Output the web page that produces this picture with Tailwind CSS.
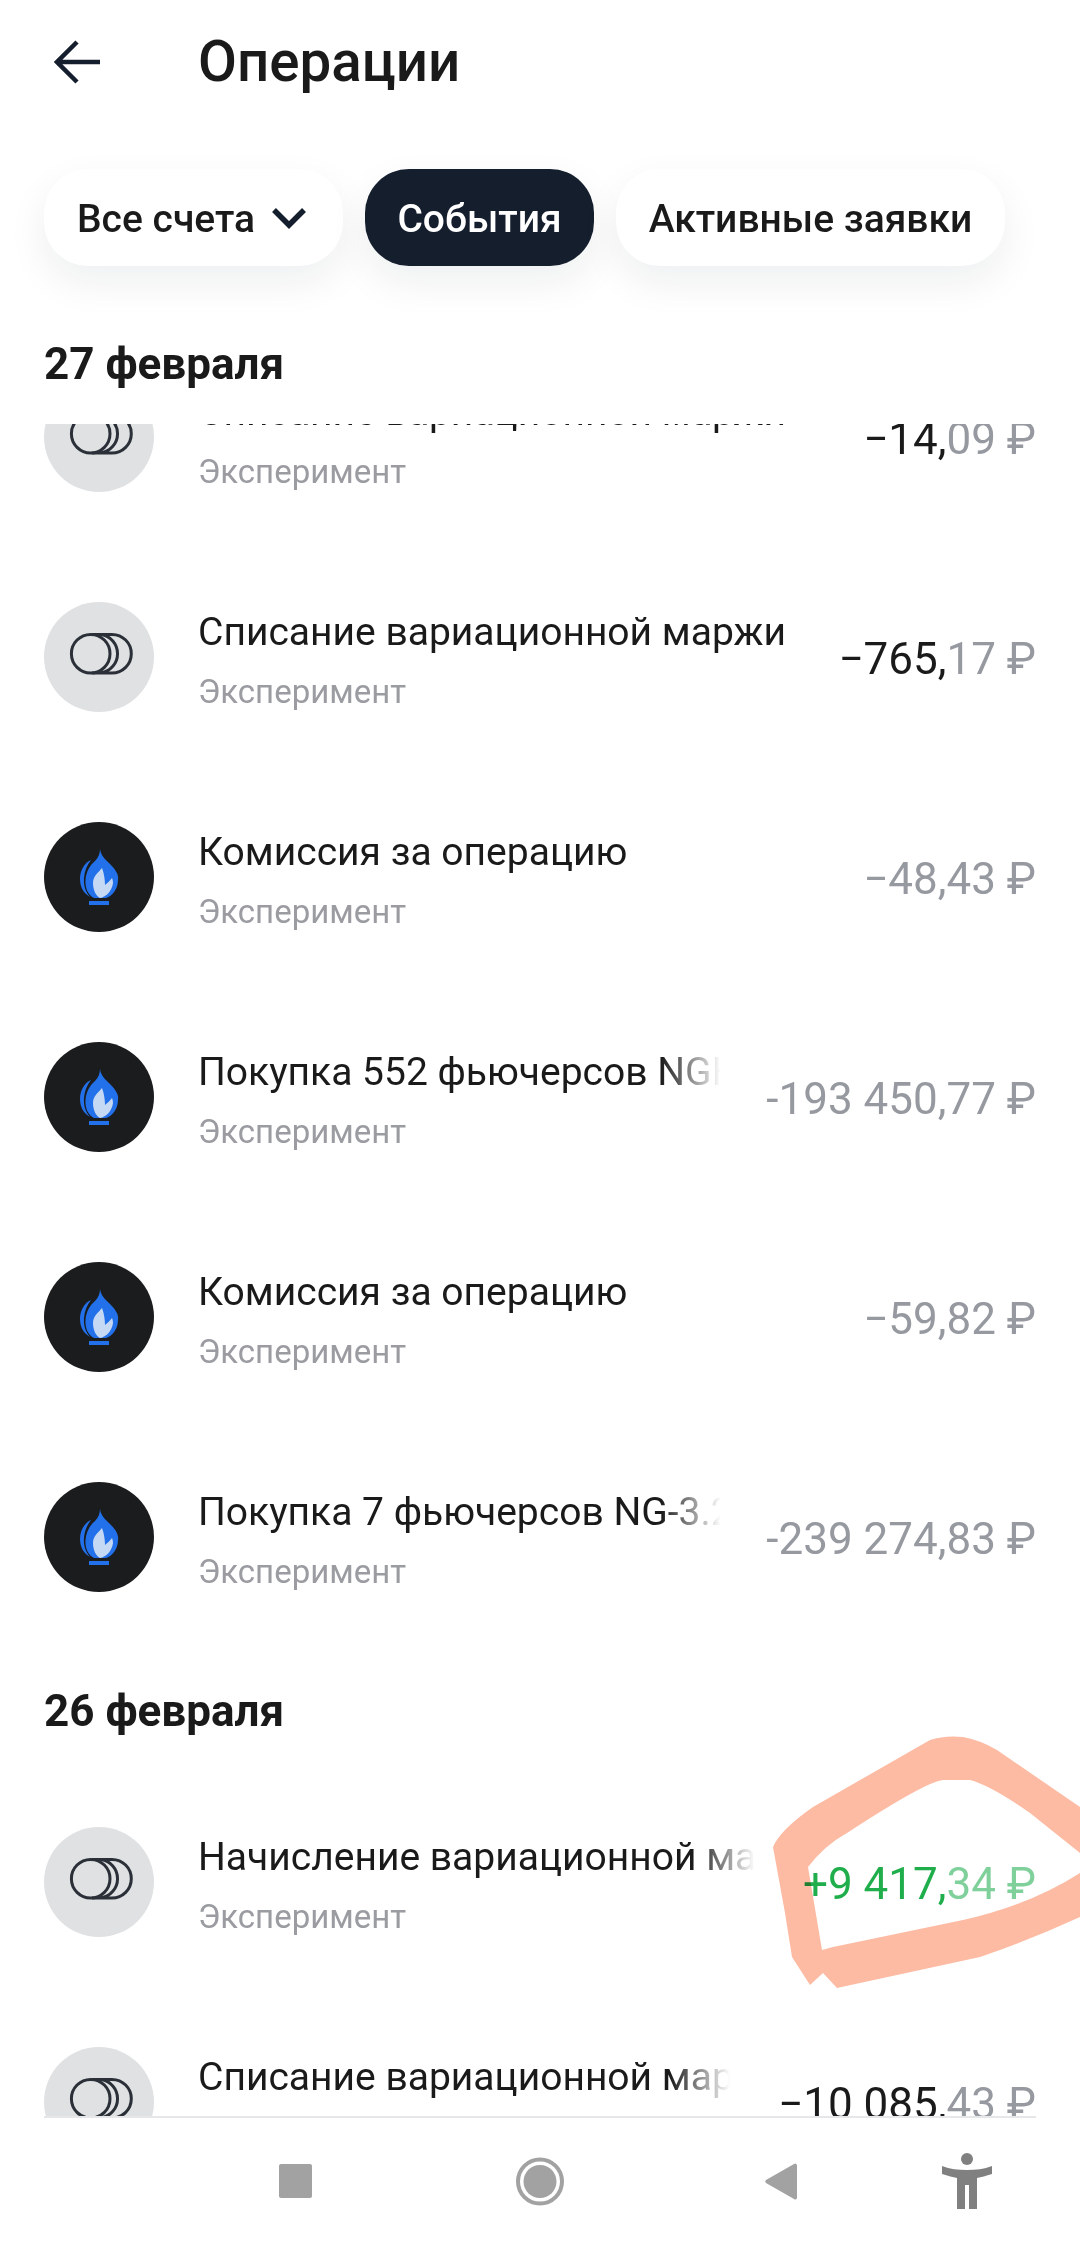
<!DOCTYPE html>
<html lang="ru"><head><meta charset="utf-8">
<script src="https://cdn.jsdelivr.net/npm/@tailwindcss/browser@4"></script>
</head>
<body class="m-0 bg-white">
<div class="relative w-[1080px] h-[2246px] overflow-hidden bg-white font-['Roboto',sans-serif] text-[#1a1a1a]">
  <header class="h-[124px] flex items-center">
    <svg class="ml-[54px] w-[46px] h-[44px]" viewBox="0 0 46 44" fill="none" stroke="#141e2d" stroke-width="4.5"><path d="M46 22H4M23 2 3 22l20 20"/></svg>
    <h1 class="ml-[98px] text-[56.500px] font-medium">Операции</h1>
  </header>
  <nav class="mt-[45px] h-[97px] flex gap-[22px] pl-[44px] text-[39px] font-medium">
    <div class="w-[299px] rounded-[44px] bg-white shadow-[0_16px_40px_rgba(20,30,45,0.07)] flex items-center pl-[33px] gap-[16px]"><span class="pt-[4px]">Все счета</span>
      <svg class="w-[36px] h-[24px]" viewBox="0 0 36 24" fill="none" stroke="#141e2d" stroke-width="5.5"><path d="M3 4l15 15L33 4"/></svg></div>
    <div class="w-[229px] rounded-[44px] bg-[#141e2d] text-white flex items-center justify-center shadow-[0_16px_40px_rgba(20,30,45,0.07)]"><span class="pt-[4px]">События</span></div>
    <div class="w-[389px] rounded-[44px] bg-white shadow-[0_16px_40px_rgba(20,30,45,0.07)] flex items-center justify-center"><span class="pt-[4px]">Активные заявки</span></div>
  </nav>
  <div class="h-[158px] pt-[38px] pl-[44px] flex items-center text-[44px] font-bold">27 февраля</div>

  <main class="h-[1692px] overflow-hidden">
    <div class="mt-[-97px]">
      <!-- row 1 -->
      <div class="h-[220px] flex items-center px-[44px]">
        <svg class="w-[110px] h-[110px] shrink-0" viewBox="0 0 110 110"><circle cx="55" cy="55" r="55" fill="#dfe1e3"/><g fill="none" stroke="#2b3038" stroke-width="3"><circle cx="46.7" cy="51.7" r="19.3"/><path d="M48 32.4h20a19.3 19.3 0 0 1 0 38.6H48M57 32.6a19.3 19.3 0 0 1 0 38.2"/></g></svg>
        <div class="ml-[44px] flex-1 min-w-0 pt-[10px]"><div class="text-[39px] leading-[50px] whitespace-nowrap overflow-hidden">Списание вариационной маржи</div><div class="mt-[10px] text-[33px] leading-[50px] text-[#9a9ca1]">Эксперимент</div></div>
        <div class="shrink-0 pl-[40px] pt-1 text-[44px] whitespace-nowrap">−14,<span class="text-[#96999f]">09 ₽</span></div>
      </div>
      <!-- row 2 -->
      <div class="h-[220px] flex items-center px-[44px]">
        <svg class="w-[110px] h-[110px] shrink-0" viewBox="0 0 110 110"><circle cx="55" cy="55" r="55" fill="#dfe1e3"/><g fill="none" stroke="#2b3038" stroke-width="3"><circle cx="46.7" cy="51.7" r="19.3"/><path d="M48 32.4h20a19.3 19.3 0 0 1 0 38.6H48M57 32.6a19.3 19.3 0 0 1 0 38.2"/></g></svg>
        <div class="ml-[44px] flex-1 min-w-0 pt-[10px]"><div class="text-[39px] leading-[50px] whitespace-nowrap overflow-hidden">Списание вариационной маржи</div><div class="mt-[10px] text-[33px] leading-[50px] text-[#9a9ca1]">Эксперимент</div></div>
        <div class="shrink-0 pl-[40px] pt-1 text-[44px] whitespace-nowrap">−765,<span class="text-[#96999f]">17 ₽</span></div>
      </div>
      <!-- row 3 -->
      <div class="h-[220px] flex items-center px-[44px]">
        <svg class="w-[110px] h-[110px] shrink-0" viewBox="0 0 110 110"><circle cx="55" cy="55" r="55" fill="#1b1c1e"/><path d="M47 38C40 41 36 49 36 57 36 64 39 71 46 75 41 69 39.500 63 40 56 40.500 49 43 43 47 38Z" fill="#2270ea"/><path d="M56 27C57 34 61 37 66 42 72 48 75 53 74 58 74 66 69 74 62 76L50 76C44 73 41 66 41.500 58 42 50 46 43 51 39 54 36 56 32 56 27Z" fill="#2270ea"/><path d="M58 46C54 51 49 54 49 61 49 68 52 74 56 76 62 75 68 69 69 61 69 59 68.500 57 68 56 66 59 63 61 61 63 61 58 60 51 58 46Z" fill="#c5d9f5"/><rect x="45" y="79" width="20" height="4" fill="#2270ea"/></svg>
        <div class="ml-[44px] flex-1 min-w-0 pt-[10px]"><div class="text-[39px] leading-[50px] whitespace-nowrap overflow-hidden">Комиссия за операцию</div><div class="mt-[10px] text-[33px] leading-[50px] text-[#9a9ca1]">Эксперимент</div></div>
        <div class="shrink-0 pl-[40px] pt-1 text-[44px] whitespace-nowrap text-[#96999f]">−48,43 ₽</div>
      </div>
      <!-- row 4 -->
      <div class="h-[220px] flex items-center px-[44px]">
        <svg class="w-[110px] h-[110px] shrink-0" viewBox="0 0 110 110"><circle cx="55" cy="55" r="55" fill="#1b1c1e"/><path d="M47 38C40 41 36 49 36 57 36 64 39 71 46 75 41 69 39.500 63 40 56 40.500 49 43 43 47 38Z" fill="#2270ea"/><path d="M56 27C57 34 61 37 66 42 72 48 75 53 74 58 74 66 69 74 62 76L50 76C44 73 41 66 41.500 58 42 50 46 43 51 39 54 36 56 32 56 27Z" fill="#2270ea"/><path d="M58 46C54 51 49 54 49 61 49 68 52 74 56 76 62 75 68 69 69 61 69 59 68.500 57 68 56 66 59 63 61 61 63 61 58 60 51 58 46Z" fill="#c5d9f5"/><rect x="45" y="79" width="20" height="4" fill="#2270ea"/></svg>
        <div class="ml-[44px] flex-1 min-w-0 pt-[10px]"><div class="text-[39px] leading-[50px] whitespace-nowrap overflow-hidden [mask-image:linear-gradient(to_left,transparent_0,black_60px)]">Покупка 552 фьючерсов NGH-3.25</div><div class="mt-[10px] text-[33px] leading-[50px] text-[#9a9ca1]">Эксперимент</div></div>
        <div class="shrink-0 pl-[45px] pt-1 text-[44px] whitespace-nowrap text-[#96999f]">-193 450,77 ₽</div>
      </div>
      <!-- row 5 -->
      <div class="h-[220px] flex items-center px-[44px]">
        <svg class="w-[110px] h-[110px] shrink-0" viewBox="0 0 110 110"><circle cx="55" cy="55" r="55" fill="#1b1c1e"/><path d="M47 38C40 41 36 49 36 57 36 64 39 71 46 75 41 69 39.500 63 40 56 40.500 49 43 43 47 38Z" fill="#2270ea"/><path d="M56 27C57 34 61 37 66 42 72 48 75 53 74 58 74 66 69 74 62 76L50 76C44 73 41 66 41.500 58 42 50 46 43 51 39 54 36 56 32 56 27Z" fill="#2270ea"/><path d="M58 46C54 51 49 54 49 61 49 68 52 74 56 76 62 75 68 69 69 61 69 59 68.500 57 68 56 66 59 63 61 61 63 61 58 60 51 58 46Z" fill="#c5d9f5"/><rect x="45" y="79" width="20" height="4" fill="#2270ea"/></svg>
        <div class="ml-[44px] flex-1 min-w-0 pt-[10px]"><div class="text-[39px] leading-[50px] whitespace-nowrap overflow-hidden">Комиссия за операцию</div><div class="mt-[10px] text-[33px] leading-[50px] text-[#9a9ca1]">Эксперимент</div></div>
        <div class="shrink-0 pl-[40px] pt-1 text-[44px] whitespace-nowrap text-[#96999f]">−59,82 ₽</div>
      </div>
      <!-- row 6 -->
      <div class="h-[220px] flex items-center px-[44px]">
        <svg class="w-[110px] h-[110px] shrink-0" viewBox="0 0 110 110"><circle cx="55" cy="55" r="55" fill="#1b1c1e"/><path d="M47 38C40 41 36 49 36 57 36 64 39 71 46 75 41 69 39.500 63 40 56 40.500 49 43 43 47 38Z" fill="#2270ea"/><path d="M56 27C57 34 61 37 66 42 72 48 75 53 74 58 74 66 69 74 62 76L50 76C44 73 41 66 41.500 58 42 50 46 43 51 39 54 36 56 32 56 27Z" fill="#2270ea"/><path d="M58 46C54 51 49 54 49 61 49 68 52 74 56 76 62 75 68 69 69 61 69 59 68.500 57 68 56 66 59 63 61 61 63 61 58 60 51 58 46Z" fill="#c5d9f5"/><rect x="45" y="79" width="20" height="4" fill="#2270ea"/></svg>
        <div class="ml-[44px] flex-1 min-w-0 pt-[10px]"><div class="text-[39px] leading-[50px] whitespace-nowrap overflow-hidden [mask-image:linear-gradient(to_left,transparent_0,black_60px)]">Покупка 7 фьючерсов NG-3.25</div><div class="mt-[10px] text-[33px] leading-[50px] text-[#9a9ca1]">Эксперимент</div></div>
        <div class="shrink-0 pl-[45px] pt-1 text-[44px] whitespace-nowrap text-[#96999f]">-239 274,83 ₽</div>
      </div>
      <div class="h-[125px] pt-[3px] pl-[44px] flex items-center text-[44px] font-bold">26 февраля</div>
      <!-- row 7 -->
      <div class="h-[220px] flex items-center px-[44px]">
        <svg class="w-[110px] h-[110px] shrink-0" viewBox="0 0 110 110"><circle cx="55" cy="55" r="55" fill="#dfe1e3"/><g fill="none" stroke="#2b3038" stroke-width="3"><circle cx="46.7" cy="51.7" r="19.3"/><path d="M48 32.4h20a19.3 19.3 0 0 1 0 38.6H48M57 32.6a19.3 19.3 0 0 1 0 38.2"/></g></svg>
        <div class="ml-[44px] flex-1 min-w-0 pt-[10px]"><div class="text-[39px] leading-[50px] whitespace-nowrap overflow-hidden [mask-image:linear-gradient(to_left,transparent_0,black_60px)]">Начисление вариационной маржи</div><div class="mt-[10px] text-[33px] leading-[50px] text-[#9a9ca1]">Эксперимент</div></div>
        <div class="shrink-0 pl-[48px] pt-1 text-[44px] whitespace-nowrap text-[#1fae4b]">+9 417,<span class="text-[#7fd09b]">34 ₽</span></div>
      </div>
      <!-- row 8 -->
      <div class="h-[220px] flex items-center px-[44px]">
        <svg class="w-[110px] h-[110px] shrink-0" viewBox="0 0 110 110"><circle cx="55" cy="55" r="55" fill="#dfe1e3"/><g fill="none" stroke="#2b3038" stroke-width="3"><circle cx="46.7" cy="51.7" r="19.3"/><path d="M48 32.4h20a19.3 19.3 0 0 1 0 38.6H48M57 32.6a19.3 19.3 0 0 1 0 38.2"/></g></svg>
        <div class="ml-[44px] flex-1 min-w-0 pt-[10px]"><div class="text-[39px] leading-[50px] whitespace-nowrap overflow-hidden [mask-image:linear-gradient(to_left,transparent_0,black_60px)]">Списание вариационной маржи</div><div class="mt-[10px] text-[33px] leading-[50px] text-[#9a9ca1]">Эксперимент</div></div>
        <div class="shrink-0 pl-[48px] pt-1 text-[44px] whitespace-nowrap">−10 085,<span class="text-[#96999f]">43 ₽</span></div>
      </div>
    </div>
  </main>

  <footer class="h-[130px] relative">
    <div class="mx-[44px] border-t-2 border-[#e6e7e8]"></div>
    <svg class="absolute left-0 top-0 w-[1080px] h-[130px]" viewBox="0 2116 1080 130">
      <rect x="279" y="2164" width="33" height="34" rx="2" fill="#a2a2a2"/>
      <circle cx="540" cy="2181.500" r="22" fill="none" stroke="#a2a2a2" stroke-width="4"/>
      <circle cx="540" cy="2181.500" r="16.500" fill="#a2a2a2"/>
      <path d="M797 2165v33a2 2 0 0 1-3 1l-28-16a2 2 0 0 1 0-3l28-16a2 2 0 0 1 3 1z" fill="#a2a2a2"/>
      <circle cx="967" cy="2159" r="6" fill="#808080"/>
      <path d="M942 2166c8 3 16 4 25 4s17-1 25-4v8c-6 2-11 3-15 4v31h-8v-24h-4v24h-8v-31c-4-1-9-2-15-4z" fill="#808080"/>
    </svg>
  </footer>

  <svg class="absolute left-0 top-0 w-[1080px] h-[2246px] pointer-events-none mix-blend-multiply" viewBox="0 0 1080 2246">
    <path d="M773 1847Q780 1830 813 1807L930 1740Q945 1735 963 1737 980 1740 997 1750L1080 1807V1853L1030 1813Q990 1785 970 1780H943Q925 1782 847 1833 825 1845 808 1867L822 1950 833 1947 963 1920Q1030 1905 1080 1873V1917Q1030 1940 980 1957L837 1988 823 1973 810 1985 792 1957 785 1913Z" fill="#fdbba4"/>
  </svg>
</div>
</body></html>
